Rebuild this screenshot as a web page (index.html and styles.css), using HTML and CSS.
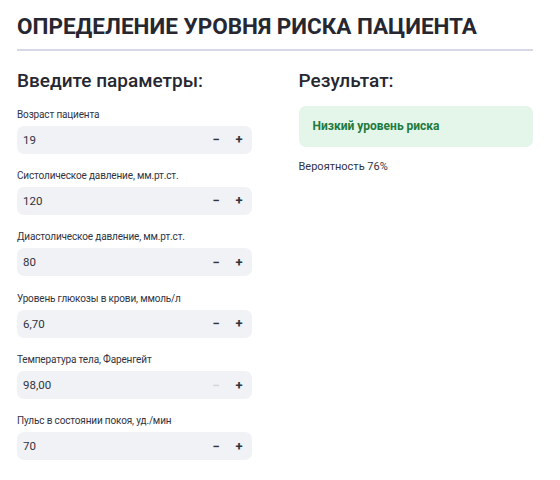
FILE: index.html
```html
<!DOCTYPE html>
<html lang="ru">
<head>
<meta charset="utf-8">
<link rel="stylesheet" href="styles.css">
</head>
<body>
<div class="page">
  <h1 class="title">ОПРЕДЕЛЕНИЕ УРОВНЯ РИСКА ПАЦИЕНТА</h1>
  <div class="cols">
    <div class="col">
      <h2 class="sub">Введите параметры:</h2>
      <div class="field">
        <div class="label">Возраст пациента</div>
        <div class="input"><span class="val">19</span><span class="btn">−</span><span class="btn">+</span></div>
      </div>
      <div class="field">
        <div class="label">Систолическое давление, мм.рт.ст.</div>
        <div class="input"><span class="val">120</span><span class="btn">−</span><span class="btn">+</span></div>
      </div>
      <div class="field">
        <div class="label">Диастолическое давление, мм.рт.ст.</div>
        <div class="input"><span class="val">80</span><span class="btn">−</span><span class="btn">+</span></div>
      </div>
      <div class="field">
        <div class="label">Уровень глюкозы в крови, ммоль/л</div>
        <div class="input"><span class="val">6,70</span><span class="btn">−</span><span class="btn">+</span></div>
      </div>
      <div class="field">
        <div class="label">Температура тела, Фаренгейт</div>
        <div class="input"><span class="val">98,00</span><span class="btn disabled">−</span><span class="btn">+</span></div>
      </div>
      <div class="field">
        <div class="label">Пульс в состоянии покоя, уд./мин</div>
        <div class="input"><span class="val">70</span><span class="btn">−</span><span class="btn">+</span></div>
      </div>
    </div>
    <div class="col">
      <h2 class="sub">Результат:</h2>
      <div class="success">Низкий уровень риска</div>
      <p class="prob">Вероятность 76%</p>
    </div>
  </div>
</div>
</body>
</html>
```
FILE: styles.css
```css
html, body {
  margin: 0;
  padding: 0;
  background: #ffffff;
}
body {
  font-family: Roboto, "Noto Sans", sans-serif;
  color: #31333f;
}
.page {
  padding: 10px 27px 0 17px;
}
.title {
  margin: 0;
  font-size: 22.5px;
  font-weight: 700;
  line-height: 32px;
  padding-bottom: 7px;
  border-bottom: 2px solid #d6d8e7;
  color: #262730;
  white-space: nowrap;
}
.cols {
  display: flex;
  gap: 47px;
  margin-top: 15.5px;
}
.col {
  flex: 1;
  min-width: 0;
}
.sub {
  margin: 0 0 11px 0;
  font-size: 19px;
  font-weight: 500;
  line-height: 28px;
  color: #262730;
}
.field {
  margin-bottom: 13.4px;
}
.label {
  font-size: 10px;
  letter-spacing: -0.15px;
  line-height: 18px;
  color: #31333f;
  margin-bottom: 2px;
}
.input {
  display: flex;
  align-items: center;
  height: 28px;
  background: #f0f2f6;
  border-radius: 7px;
  font-size: 11.5px;
}
.val {
  flex: 1;
  padding-left: 6px;
}
.btn {
  width: 23px;
  text-align: center;
  font-weight: 700;
  font-size: 13px;
  color: #31333f;
}
.btn:last-child {
  margin-right: 1px;
}
.btn.disabled {
  color: #d3d5db;
}
.success {
  background: #e4f5ea;
  color: #217a3c;
  border-radius: 7px;
  height: 41px;
  display: flex;
  align-items: center;
  padding-left: 14px;
  font-size: 12px;
  font-weight: 700;
}
.prob {
  margin: 11.5px 0 0 0;
  font-size: 11px;
  line-height: 18px;
}
```
